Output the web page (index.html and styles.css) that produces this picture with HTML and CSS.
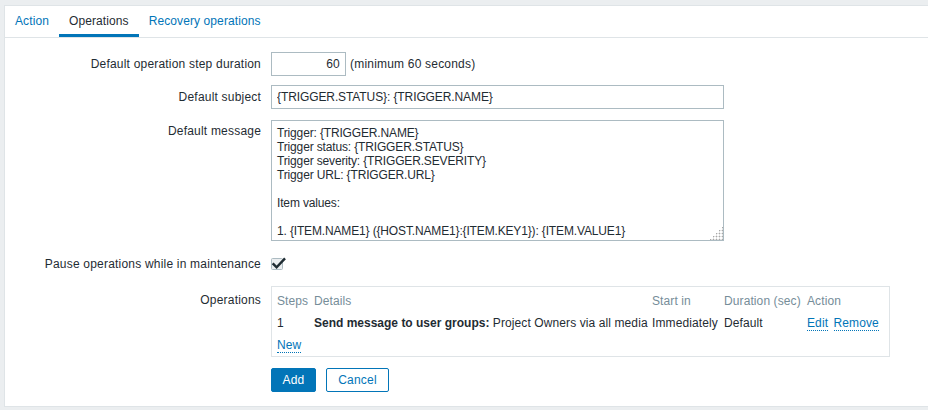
FILE: index.html
```html
<!DOCTYPE html>
<html>
<head>
<meta charset="utf-8">
<link rel="stylesheet" href="styles.css">
</head>
<body>
<div class="panel">
  <ul class="tabs">
    <li class="tab"><a>Action</a></li>
    <li class="tab active"><a>Operations</a></li>
    <li class="tab"><a>Recovery operations</a></li>
  </ul>
  <div class="form">
    <div class="row row-duration">
      <label class="lbl">Default operation step duration</label>
      <div class="field inline">
        <input class="inp inp-num" type="text" value="60">
        <span class="hint">(minimum 60 seconds)</span>
      </div>
    </div>
    <div class="row row-subject">
      <label class="lbl">Default subject</label>
      <div class="field"><input class="inp inp-wide" type="text" value="{TRIGGER.STATUS}: {TRIGGER.NAME}"></div>
    </div>
    <div class="row row-message">
      <label class="lbl lbl-top">Default message</label>
      <div class="field"><textarea class="txt">Trigger: {TRIGGER.NAME}
Trigger status: {TRIGGER.STATUS}
Trigger severity: {TRIGGER.SEVERITY}
Trigger URL: {TRIGGER.URL}

Item values:

1. {ITEM.NAME1} ({HOST.NAME1}:{ITEM.KEY1}): {ITEM.VALUE1}
2. {ITEM.NAME2} ({HOST.NAME2}:{ITEM.KEY2}): {ITEM.VALUE2}
3. {ITEM.NAME3} ({HOST.NAME3}:{ITEM.KEY3}): {ITEM.VALUE3}

Original event ID: {EVENT.ID}</textarea></div>
    </div>
    <div class="row row-pause">
      <label class="lbl">Pause operations while in maintenance</label>
      <div class="field">
        <span class="chk">
          <svg width="16" height="14" viewBox="0 0 16 14">
            <rect x="0.5" y="1.5" width="11" height="11" rx="1" fill="#ebeef0" stroke="#acbbc2"/>
            <path d="M2.5 7.2 L5.6 10.3 L13.2 2.2" fill="none" stroke="#1f2c33" stroke-width="2.4" stroke-linecap="square"/>
          </svg>
        </span>
      </div>
    </div>
    <div class="row row-ops">
      <label class="lbl lbl-ops">Operations</label>
      <div class="field">
        <div class="opsbox">
          <table class="ops">
            <colgroup>
              <col class="c1"><col class="c2"><col class="c3"><col class="c4"><col class="c5">
            </colgroup>
            <thead>
              <tr><th>Steps</th><th>Details</th><th>Start in</th><th>Duration (sec)</th><th>Action</th></tr>
            </thead>
            <tbody>
              <tr>
                <td>1</td>
                <td><b>Send message to user groups:</b> Project Owners via all media</td>
                <td>Immediately</td>
                <td>Default</td>
                <td><a class="lnk">Edit</a> <a class="lnk">Remove</a></td>
              </tr>
              <tr>
                <td colspan="5"><a class="lnk">New</a></td>
              </tr>
            </tbody>
          </table>
        </div>
      </div>
    </div>
    <div class="row row-buttons">
      <span class="lbl"></span>
      <div class="field buttons">
        <button class="btn btn-primary">Add</button>
        <button class="btn btn-alt">Cancel</button>
      </div>
    </div>
  </div>
</div>
</body>
</html>
```

FILE: styles.css
```css
html, body {
  margin: 0;
  padding: 0;
}
body {
  background: #ebeef0;
  font-family: "Liberation Sans", Arial, sans-serif;
  font-size: 12px;
  letter-spacing: 0.2px;
  color: #1f2c33;
  padding: 5px 0 0 4px;
  height: 410px;
  box-sizing: border-box;
  overflow: hidden;
}
.panel {
  background: #fff;
  border: 1px solid #dfe4e7;
  border-right: none;
  height: 402px;
  box-sizing: border-box;
}
.tabs {
  list-style: none;
  margin: 0;
  padding: 0;
  display: flex;
  border-bottom: 1px solid #dfe4e7;
  height: 31px;
  letter-spacing: 0.1px;
}
.tab {
  padding: 0 10px;
  display: flex;
  align-items: center;
  color: #0275b8;
  font-size: 12px;
  border-bottom: 3px solid transparent;
  margin-bottom: -1px;
  padding-top: 2px;
  box-sizing: border-box;
  height: 31px;
}
.tab.active {
  color: #1f2c33;
  border-bottom-color: #0275b8;
}
.form {
  padding-top: 14px;
}
.row {
  display: grid;
  grid-template-columns: 266px 1fr;
  align-items: center;
}
.lbl {
  text-align: right;
  padding-right: 10px;
  white-space: nowrap;
}
.field.inline {
  display: flex;
  align-items: center;
  gap: 4px;
}
.inp {
  font-family: "Liberation Sans", Arial, sans-serif;
  font-size: 12px;
  letter-spacing: -0.1px;
  color: #1f2c33;
  border: 1px solid #acbbc2;
  background: #fff;
  height: 24px;
  box-sizing: border-box;
  padding: 0 5px;
  margin: 0;
  outline: none;
}
.inp-num {
  width: 75px;
  text-align: right;
  letter-spacing: 0.2px;
}
.inp-wide {
  width: 453px;
}
.row-subject { margin-top: 9px; }
.row-message { margin-top: 11px; align-items: start; }
.lbl-top { padding-top: 4px; }
.txt {
  display: block;
  font-family: "Liberation Sans", Arial, sans-serif;
  font-size: 12px;
  letter-spacing: -0.15px;
  line-height: 14px;
  color: #1f2c33;
  border: 1px solid #acbbc2;
  width: 453px;
  height: 121px;
  box-sizing: border-box;
  padding: 5px 5px 3px;
  margin: 0;
  resize: both;
  overflow-y: scroll;
  outline: none;
}
.txt::-webkit-scrollbar {
  width: 12px;
}
.txt::-webkit-scrollbar-track {
  background: #d4d4d4;
}
.txt::-webkit-scrollbar-thumb {
  background: #999;
  border: 3px solid #d4d4d4;
  border-radius: 6px;
}
.txt::-webkit-scrollbar-corner {
  background: #fff;
}
.txt::-webkit-resizer {
  background-color: #fff;
  background-image:
    linear-gradient(135deg, #fff 55%, transparent 55%),
    radial-gradient(circle, #a8a8a8 0.8px, transparent 1.1px);
  background-size: 100% 100%, 3px 3px;
  background-position: 0 0, 1px 1px;
}
.row-pause { margin-top: 16px; }
.chk {
  display: block;
  height: 14px;
}
.chk svg { display: block; }
.row-ops { margin-top: 15px; align-items: start; }
.lbl-ops { padding-top: 7px; }
.opsbox {
  border: 1px solid #dfe4e7;
  width: 619px;
  height: 71px;
  box-sizing: border-box;
  padding: 3px 0 0 5px;
}
.ops {
  border-collapse: collapse;
  table-layout: fixed;
  width: 608px;
  letter-spacing: 0.1px;
}
.c1 { width: 37px; }
.c2 { width: 338px; }
.c3 { width: 72px; }
.c4 { width: 83px; }
.c5 { width: 78px; }
.ops th {
  font-weight: normal;
  color: #768d99;
  text-align: left;
  padding: 0;
  height: 22px;
  white-space: nowrap;
}
.ops td {
  padding: 0;
  height: 22px;
  white-space: nowrap;
  vertical-align: middle;
}
.ops b { font-weight: bold; letter-spacing: 0; }
.lnk {
  color: #0275b8;
  border-bottom: 1px dotted #0275b8;
  cursor: pointer;
}
.lnk + .lnk { margin-left: 2px; }
.row-buttons { margin-top: 11px; }
.field.buttons {
  display: flex;
  align-items: center;
  gap: 10px;
}
.btn {
  font-family: "Liberation Sans", Arial, sans-serif;
  font-size: 12px;
  letter-spacing: 0.2px;
  height: 24px;
  box-sizing: border-box;
  border-radius: 2px;
  margin: 0;
  padding: 0 5px;
  cursor: pointer;
}
.btn-primary {
  background: #0275b8;
  border: 1px solid #0275b8;
  color: #fff;
  width: 45px;
}
.btn-alt {
  background: #fff;
  border: 1px solid #0275b8;
  color: #0275b8;
  width: 63px;
}
```
